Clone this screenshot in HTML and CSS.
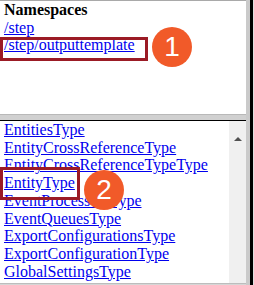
FILE: index.html
```html
<!DOCTYPE html>
<html>
<head>
<meta charset="utf-8">
<link rel="stylesheet" href="styles.css">
</head>
<body>
<div class="window">
  <div class="main">
    <div class="top-pane">
      <div class="heading">Namespaces</div>
      <a href="#">/step</a><br>
      <a href="#">/step/outputtemplate</a>
    </div>
    <div class="splitter"></div>
    <div class="lower-pane">
      <div class="list">
        <a href="#">EntitiesType</a><br>
        <a href="#">EntityCrossReferenceType</a><br>
        <a href="#">EntityCrossReferenceTypeType</a><br>
        <a href="#">EntityType</a><br>
        <a href="#">EventProcessorsType</a><br>
        <a href="#">EventQueuesType</a><br>
        <a href="#">ExportConfigurationsType</a><br>
        <a href="#">ExportConfigurationType</a><br>
        <a href="#">GlobalSettingsType</a>
      </div>
      <div class="scrollbar"><span class="arrow"></span></div>
    </div>
    <div class="bottom-edge"></div>
  </div>
  <div class="right-edge"></div>

  <div class="mark mark-1"></div>
  <div class="badge badge-1">1</div>
  <div class="mark mark-2"></div>
  <div class="badge badge-2">2</div>
</div>
</body>
</html>
```
FILE: styles.css
```css
html, body {
  margin: 0;
  padding: 0;
}
body {
  width: 254px;
  height: 285px;
  overflow: hidden;
  background: #d6d6d6;
  font-family: "Liberation Serif", "Times New Roman", serif;
  font-size: 16px;
  line-height: 17.7px;
}
a {
  color: #0000ee;
  text-decoration: underline;
}
.window {
  position: relative;
  display: flex;
  width: 254px;
  height: 285px;
}
.main {
  display: flex;
  flex-direction: column;
  width: 246px;
}
.top-pane {
  height: 114px;
  background: #fff;
  border-top: 1px solid #a9a9a9;
  padding-left: 4px;
  box-sizing: border-box;
}
.heading {
  font-weight: bold;
  color: #000;
}
.splitter {
  height: 5px;
  background: #d0d0d0;
  border-top: 1px solid #b8b8b8;
  border-bottom: 1px solid #000;
}
.lower-pane {
  display: flex;
  height: 162px;
  background: #fff;
  overflow: hidden;
}
.list {
  flex: 1;
  padding-left: 4px;
  white-space: nowrap;
  overflow: hidden;
}
.scrollbar {
  width: 17px;
  background: #f0f0f0;
  display: flex;
  justify-content: center;
  align-items: flex-start;
  padding-top: 16px;
  box-sizing: border-box;
}
.arrow {
  width: 0;
  height: 0;
  border-left: 4px solid transparent;
  border-right: 4px solid transparent;
  border-bottom: 4px solid #505050;
}
.bottom-edge {
  flex: 1;
  background: #d6d6d6;
  border-top: 1px solid #bdbdbd;
}
.right-edge {
  width: 8px;
  box-sizing: border-box;
  border-left: 4px solid #cacaca;
  border-right: 1px solid #e0e0e0;
  background: #000;
}
.mark {
  position: absolute;
  border: 3px solid #9b1b25;
  box-sizing: border-box;
}
.mark-1 {
  left: 0;
  top: 37px;
  width: 148px;
  height: 24px;
}
.mark-2 {
  left: 0;
  top: 167px;
  width: 80px;
  height: 33px;
}
.badge {
  position: absolute;
  width: 40px;
  height: 40px;
  border-radius: 50%;
  background: #f15a29;
  color: #fff;
  font-family: "Liberation Sans", Arial, sans-serif;
  font-size: 28px;
  line-height: 40px;
  text-align: center;
}
.badge-1 {
  left: 152px;
  top: 27px;
}
.badge-2 {
  left: 84px;
  top: 170px;
}
```
